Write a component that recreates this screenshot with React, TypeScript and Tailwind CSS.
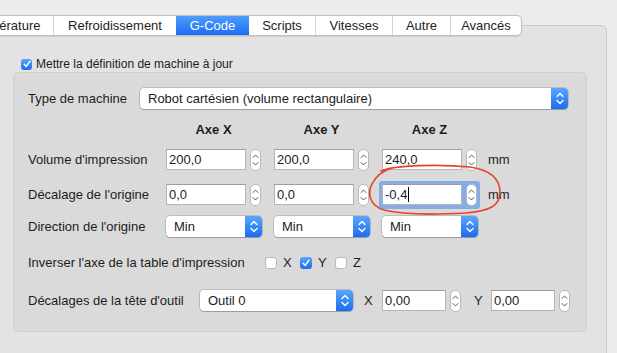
import React from "react";

function Chevrons({ color = "white", w = 16, h = 21 }: { color?: string; w?: number; h?: number }) {
  const cx = w / 2;
  return (
    <svg width={w} height={h} viewBox={`0 0 ${w} ${h}`}>
      <path d={`M${cx - 3} ${h / 2 - 2} L${cx} ${h / 2 - 5} L${cx + 3} ${h / 2 - 2}`} stroke={color} strokeWidth="1.4" fill="none" strokeLinecap="round" strokeLinejoin="round" />
      <path d={`M${cx - 3} ${h / 2 + 2} L${cx} ${h / 2 + 5} L${cx + 3} ${h / 2 + 2}`} stroke={color} strokeWidth="1.4" fill="none" strokeLinecap="round" strokeLinejoin="round" />
    </svg>
  );
}

function Popup({ text, className }: { text: string; className: string }) {
  return (
    <div className={`flex h-[21px] rounded-[4px] bg-white shadow-[0_0_0_0.5px_rgba(0,0,0,0.28),0_1px_1px_rgba(0,0,0,0.18)] ${className}`}>
      <div className="flex-1 pl-[8px] text-[13px] leading-[21px]">{text}</div>
      <div className="flex w-[17px] items-center justify-center rounded-r-[4px] bg-gradient-to-b from-[#5aa5fb] to-[#1b6cf2]">
        <Chevrons />
      </div>
    </div>
  );
}

function Stepper() {
  return (
    <div className="flex h-[22px] w-[11px] items-center justify-center rounded-[5px] border border-[#b9b9b9] bg-white">
      <svg width="9" height="20" viewBox="0 0 9 20">
        <path d="M2 7.5 L4.5 5 L7 7.5" stroke="#555" strokeWidth="1" fill="none" strokeLinecap="round" />
        <path d="M2 12.5 L4.5 15 L7 12.5" stroke="#555" strokeWidth="1" fill="none" strokeLinecap="round" />
      </svg>
    </div>
  );
}

function Field({ value, w = "w-[80px]", cursor = false }: { value: string; w?: string; cursor?: boolean }) {
  return (
    <div className={`flex h-[21px] items-center border border-[#b4b4b4] border-t-[#9c9c9c] bg-white pl-[2px] text-[13px] ${w}`}>
      <span>{value}</span>
      {cursor && <span className="ml-[1px] inline-block h-[15px] w-px bg-black" />}
    </div>
  );
}

function FieldStep({ value, w, cursor }: { value: string; w?: string; cursor?: boolean }) {
  return (
    <div className="flex items-center gap-[4px]">
      <Field value={value} w={w} cursor={cursor} />
      <Stepper />
    </div>
  );
}

function CheckBox({ checked, size = "h-[12px] w-[12px]" }: { checked: boolean; size?: string }) {
  if (checked) {
    return (
      <div className={`flex items-center justify-center rounded-[3px] bg-gradient-to-b from-[#5aa5fb] to-[#1b6cf2] ${size}`}>
        <svg width="10" height="10" viewBox="0 0 10 10">
          <path d="M2.2 5.3 L4.2 7.4 L7.9 2.4" stroke="white" strokeWidth="1.5" fill="none" strokeLinecap="round" strokeLinejoin="round" />
        </svg>
      </div>
    );
  }
  return <div className={`rounded-[3px] border border-[#b9b9b9] bg-white ${size}`} />;
}

const tabs: { label: string; w: string; active?: boolean }[] = [
  { label: "Température", w: "w-[98px]" },
  { label: "Refroidissement", w: "w-[123px]" },
  { label: "G-Code", w: "w-[73px]", active: true },
  { label: "Scripts", w: "w-[66px]" },
  { label: "Vitesses", w: "w-[77px]" },
  { label: "Autre", w: "w-[58px]" },
  { label: "Avancés", w: "w-[71px]" },
];

export default function App() {
  return (
    <div className="relative h-[353px] w-[617px] overflow-hidden bg-[#ececec] font-['Liberation_Sans',Arial,sans-serif] text-[#1d1d1d]">
      <div className="pt-[15px]">
        <div className="relative z-10 -ml-[46px] flex h-[21px] w-fit overflow-hidden rounded-[5px] border border-[#c0c0c0] bg-white text-[13px] shadow-[0_0.5px_1px_rgba(0,0,0,0.1)]">
          {tabs.map((t, i) => (
            <div
              key={t.label}
              className={`${t.w} text-center leading-[19px] ${i > 0 && !t.active && !tabs[i - 1].active ? "border-l border-[#d6d6d6]" : ""} ${
                t.active ? "bg-gradient-to-b from-[#4f9dfb] to-[#1a6cf3] text-white" : ""
              }`}
            >
              {t.label}
            </div>
          ))}
        </div>
        <div className="-ml-[5px] mr-[10px] -mt-[11px] h-[400px] rounded-tr-[5px] border border-[#cacaca] bg-[#e3e3e3] pl-[17px] pr-[19px] pt-[31px]">
          <div className="flex h-[14px] items-center pl-[8px] text-[12px]">
            <CheckBox checked size="h-[11px] w-[11px]" />
            <span className="ml-[4px]">Mettre la définition de machine à jour</span>
          </div>
          <div className="mt-[1px] h-[260px] rounded-[5px] border border-[#d0d0d0] bg-[#dadada] pl-[14px] pt-[15px] text-[13px]">
            <div className="flex h-[21px] items-center">
              <div className="w-[112px]">Type de machine</div>
              <Popup text="Robot cartésien (volume rectangulaire)" className="w-[428px]" />
            </div>
            <div className="mt-[13px] flex h-[16px] items-center pl-[138px] font-bold">
              <div className="mr-[13px] w-[95px] text-center">Axe X</div>
              <div className="mr-[13px] w-[95px] text-center">Axe Y</div>
              <div className="w-[95px] text-center">Axe Z</div>
            </div>
            <div className="mt-[11px] flex h-[21px] items-center">
              <div className="w-[138px]">Volume d'impression</div>
              <div className="flex items-center gap-[13px]">
                <FieldStep value="200,0" />
                <FieldStep value="200,0" />
                <FieldStep value="240,0" />
              </div>
              <span className="ml-[11px]">mm</span>
            </div>
            <div className="mt-[14px] flex h-[21px] items-center">
              <div className="w-[138px]">Décalage de l'origine</div>
              <div className="flex items-center gap-[13px]">
                <FieldStep value="0,0" />
                <FieldStep value="0,0" />
                <div className="-m-[3px] rounded-[3px] bg-[#86acE6] p-[3px]">
                  <FieldStep value="-0,4" cursor />
                </div>
              </div>
              <span className="ml-[11px]">mm</span>
            </div>
            <div className="mt-[11px] flex h-[21px] items-center">
              <div className="w-[138px]">Direction de l'origine</div>
              <div className="flex items-center gap-[12px]">
                <Popup text="Min" className="w-[96px]" />
                <Popup text="Min" className="w-[96px]" />
                <Popup text="Min" className="w-[96px]" />
              </div>
            </div>
            <div className="mt-[18px] flex h-[16px] items-center">
              <div className="w-[237px]">Inverser l'axe de la table d'impression</div>
              {[
                ["X", false],
                ["Y", true],
                ["Z", false],
              ].map(([l, c]) => (
                <div key={l as string} className="flex items-center">
                  <CheckBox checked={c as boolean} />
                  <span className="ml-[6px] w-[17px]">{l as string}</span>
                </div>
              ))}
            </div>
            <div className="mt-[19px] flex h-[21px] items-center">
              <div className="w-[172px]">Décalages de la tête d'outil</div>
              <Popup text="Outil 0" className="w-[153px]" />
              <span className="ml-[11px] w-[18px]">X</span>
              <FieldStep value="0,00" w="w-[64px]" />
              <span className="ml-[13px] w-[17px]">Y</span>
              <FieldStep value="0,00" w="w-[64px]" />
            </div>
          </div>
        </div>
      </div>
      <svg className="pointer-events-none absolute inset-0" width="617" height="353" viewBox="0 0 617 353">
        <path
          d="M381 171 C 395 165, 440 164, 470 167 C 490 170, 500 178, 500 192 C 500 206, 490 211, 465 213 C 430 215, 400 214, 384 210 C 370 206, 367 194, 372 184 C 376 176, 382 171, 392 168"
          stroke="#e5432a"
          strokeWidth="1.6"
          fill="none"
          strokeLinecap="round"
        />
      </svg>
    </div>
  );
}
